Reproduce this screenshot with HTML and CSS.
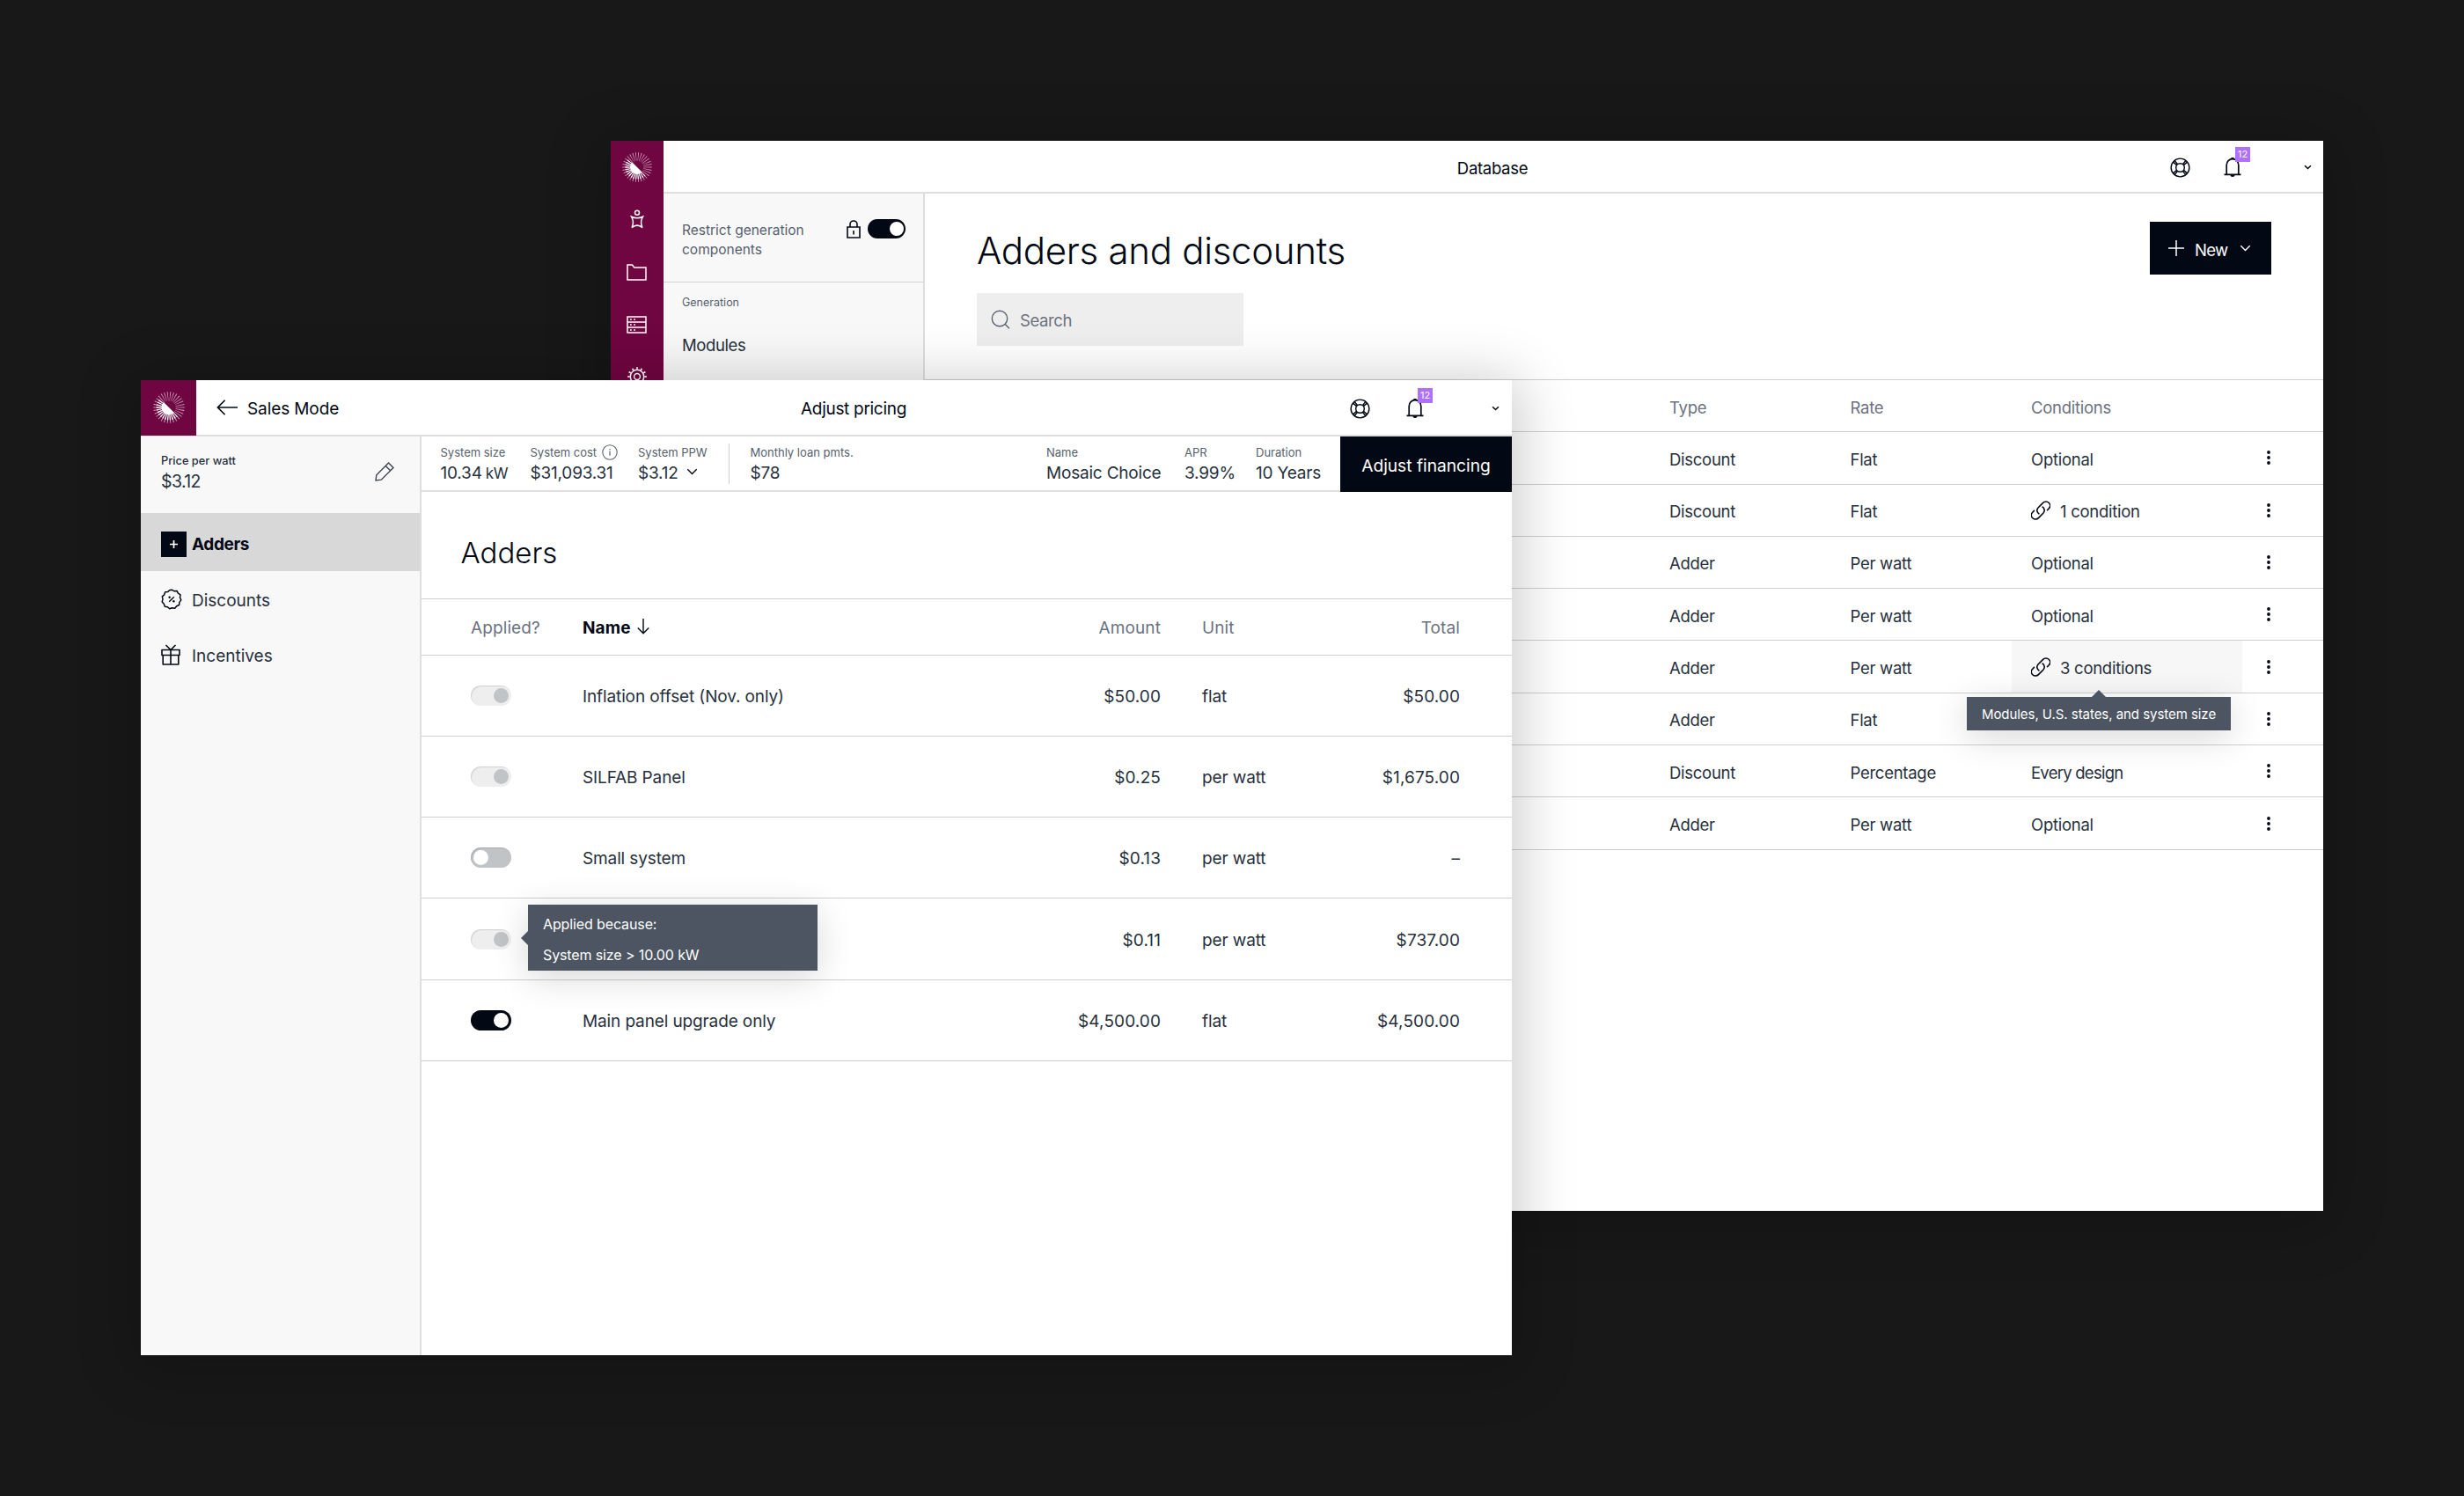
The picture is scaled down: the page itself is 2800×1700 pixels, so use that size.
FILE: index.html
```html
<!DOCTYPE html>
<html lang="en">
<head>
  <meta charset="utf-8">
  <title>Adjust pricing</title>
  <link rel="stylesheet" href="styles.css">
</head>
<body>
  <!-- Icons -->
  <svg class="sprite" width="0" height="0">
    <defs>
      <clipPath id="lower-half"><path d="M0 0L34 34H0z"/></clipPath>
    </defs>
    <symbol id="logo" viewBox="0 0 34 34">
      <circle cx="17" cy="17" r="12" fill="none" stroke="#fff" stroke-opacity=".6" stroke-width="9.6" pathLength="120" stroke-dasharray="1.15 2.85" transform="rotate(-1.7 17 17)"/>
      <g clip-path="url(#lower-half)">
        <circle cx="17" cy="17" r="8" fill="#fff"/>
        <circle cx="17" cy="17" r="10.6" fill="none" stroke="#fff" stroke-width="6" pathLength="120" stroke-dasharray="2 2" transform="rotate(-3 17 17)"/>
      </g>
    </symbol>
    <symbol id="person" viewBox="0 0 16 22">
      <g fill="none" stroke="#fff" stroke-width="1.5">
        <circle cx="8" cy="3.8" r="2.5"/>
        <path d="M1.6 8.3Q8 11.2 14.4 8.3Q11 14 14 20.6Q8 15.6 2 20.6Q5 14 1.6 8.3z"/>
      </g>
    </symbol>
    <symbol id="folder" viewBox="0 0 23 19">
      <path d="M1 1h5.5l2.2 3H22v14H1z" fill="none" stroke="#fff" stroke-width="1.5"/>
    </symbol>
    <symbol id="server" viewBox="0 0 23 20">
      <path d="M1 1h21v18H1zM1 7h21M1 13h21" fill="none" stroke="#fff" stroke-width="1.5"/>
      <path d="M4 4h1.8M8.2 4h1.8M4 10h1.8M8.2 10h1.8M4 16h1.8M8.2 16h1.8" stroke="#fff" stroke-width="1.7"/>
    </symbol>
    <symbol id="gear" viewBox="0 0 22 22">
      <g fill="none" stroke="#fff">
        <circle cx="11" cy="11" r="7.7" stroke-width="1.5"/>
        <circle cx="11" cy="11" r="3.4" stroke-width="1.5"/>
        <circle cx="11" cy="11" r="9.5" stroke-width="2.6" pathLength="120" stroke-dasharray="3.4 6.6" transform="rotate(-5 11 11)"/>
      </g>
    </symbol>
    <symbol id="lock" viewBox="0 0 16 21">
      <path d="M1 8h14v12H1zM4 8V5a4 4 0 0 1 8 0v3M8 12v4.4" fill="none" stroke="#020814" stroke-width="1.6"/>
    </symbol>
    <symbol id="buoy" viewBox="0 0 24 24">
      <g fill="none" stroke="#020814" stroke-width="1.5">
        <circle cx="12" cy="12" r="10.8"/>
        <circle cx="12" cy="12" r="5"/>
        <path d="M3.6 5.4L8 9M5.4 3.6L9 8M20.4 5.4L16 9M18.6 3.6L15 8M3.6 18.6L8 15M5.4 20.4L9 16M20.4 18.6L16 15M18.6 20.4L15 16"/>
      </g>
    </symbol>
    <symbol id="bell" viewBox="0 0 20 24">
      <path d="M.5 20.3h19M3.2 20V9.5a6.8 6.8 0 0 1 13.6 0V20M10 3V1.2" fill="none" stroke="#020814" stroke-width="1.7"/>
      <path d="M8.4 1h3.2v1.6H8.4zM7.5 20.5h5a2.5 2.5 0 0 1-5 0z" fill="#020814"/>
    </symbol>
    <symbol id="chevron" viewBox="0 0 12 8">
      <path d="M.8 1.2L6 6.5L11.2 1.2" fill="none" stroke="currentColor" stroke-width="1.4"/>
    </symbol>
    <symbol id="chevron-small" viewBox="0 0 10 6">
      <path d="M1.2 1L5 4.7L8.8 1" fill="none" stroke="#020814" stroke-width="1.7"/>
    </symbol>
    <symbol id="plus" viewBox="0 0 18 18">
      <path d="M9 0v18M0 9h18" stroke="#fff"/>
    </symbol>
    <symbol id="search" viewBox="0 0 22 22">
      <path d="M15.8 16L21 21.2M18.7 10a8.7 8.7 0 1 1-17.4 0a8.7 8.7 0 0 1 17.4 0z" fill="none" stroke="#5b6472" stroke-width="1.4"/>
    </symbol>
    <symbol id="back" viewBox="0 0 24 18">
      <path d="M1.4 9H24M9.6 .8L1.4 9l8.2 8.2" fill="none" stroke="#020814" stroke-width="1.6"/>
    </symbol>
    <symbol id="pencil" viewBox="0 0 22 22">
      <path d="M1 21l.8-6.2L15.6 1L21 6.4L7.2 20.2zM12.2 4.4l5.4 5.4" fill="none" stroke="#3c4552" stroke-width="1.4"/>
    </symbol>
    <symbol id="percent" viewBox="0 0 24 24">
      <path d="M12 1.2L14.8 2.7L18 2.4L19.4 5.2L22 6.9L21.5 10L22.8 12.9L20.9 15.4L20.6 18.5L17.7 19.7L15.7 22.2L12.6 21.7L9.7 22.8L7.4 20.7L4.3 20.2L3.3 17.2L1.2 14.9L2 11.9L1.3 8.8L3.7 6.8L4.7 3.8L7.8 3.4L9.6 1.8z" fill="none" stroke="#020814" stroke-width="1.5" stroke-linejoin="round"/>
      <path d="M14.8 9.2L9.2 14.8" stroke="#020814" stroke-width="1.4"/>
      <circle cx="9.6" cy="9.8" r="1.2" fill="#020814"/>
      <circle cx="14.4" cy="14.2" r="1.2" fill="#020814"/>
    </symbol>
    <symbol id="gift" viewBox="0 0 22 24">
      <path d="M1 6.5h20v6H1zM2.2 12.5V23h17.6V12.5M11 6.5V23M5.5 1L11 6.5L16.5 1" fill="none" stroke="#020814" stroke-width="1.6" stroke-linejoin="round"/>
    </symbol>
    <symbol id="down" viewBox="0 0 14 18">
      <path d="M7 0v16.5M.8 10.5L7 16.7l6.2-6.2" fill="none" stroke="#020814" stroke-width="1.4"/>
    </symbol>
    <symbol id="link" viewBox="0 0 22 22">
      <g fill="none" stroke="#020814" stroke-width="1.6">
        <path d="M9.4 15.2a4.6 4.6 0 0 1-1.4-7.2l5.6-5.6a4.6 4.6 0 0 1 6.7 6.4l-2.2 2.3"/>
        <path d="M12.6 6.8a4.6 4.6 0 0 1 1.4 7.2l-5.6 5.6a4.6 4.6 0 0 1-6.7-6.4l2.2-2.3"/>
      </g>
    </symbol>
    <symbol id="dots" viewBox="0 0 4 16">
      <circle cx="2" cy="2" r="1.9"/><circle cx="2" cy="8" r="1.9"/><circle cx="2" cy="14" r="1.9"/>
    </symbol>
    <symbol id="info" viewBox="0 0 18 18">
      <circle cx="9" cy="9" r="8.2" fill="none" stroke="#5b6472" stroke-width="1.1"/>
      <path d="M9 7.5v5.3M9 4.9v1.4" stroke="#5b6472" stroke-width="1.2"/>
    </symbol>
  </svg>

  <!-- Database window -->
  <div class="window database">
    <div class="rail">
      <svg class="rail-logo"><use href="#logo"/></svg>
      <svg class="rail-person"><use href="#person"/></svg>
      <svg class="rail-folder"><use href="#folder"/></svg>
      <svg class="rail-server"><use href="#server"/></svg>
      <svg class="rail-gear"><use href="#gear"/></svg>
    </div>
    <div class="db-body">
      <div class="topbar">
        <span class="title">Database</span>
        <div class="top-icons">
          <svg class="buoy"><use href="#buoy"/></svg>
          <div class="bell"><svg><use href="#bell"/></svg><span class="badge">12</span></div>
          <svg class="chevron-small"><use href="#chevron-small"/></svg>
        </div>
      </div>
      <div class="db-columns">
        <div class="db-side">
          <div class="restrict">
            <span class="restrict-label">Restrict generation<br>components</span>
            <svg class="lock"><use href="#lock"/></svg>
            <span class="toggle on"></span>
          </div>
          <div class="side-group">Generation</div>
          <div class="side-link">Modules</div>
        </div>
        <div class="db-main">
          <div class="db-head">
            <div>
              <h1>Adders and discounts</h1>
              <div class="search"><svg><use href="#search"/></svg><span>Search</span></div>
            </div>
            <button class="new-btn"><svg class="plus"><use href="#plus"/></svg><span>New</span><svg class="chevron"><use href="#chevron"/></svg></button>
          </div>
          <div class="db-table">
            <div class="db-row db-th"><span>Type</span><span>Rate</span><span>Conditions</span></div>
            <div class="db-row"><span>Discount</span><span>Flat</span><span>Optional</span><svg class="dots"><use href="#dots"/></svg></div>
            <div class="db-row"><span>Discount</span><span>Flat</span><span class="cond"><svg><use href="#link"/></svg><b>1 condition</b></span><svg class="dots"><use href="#dots"/></svg></div>
            <div class="db-row"><span>Adder</span><span>Per watt</span><span>Optional</span><svg class="dots"><use href="#dots"/></svg></div>
            <div class="db-row"><span>Adder</span><span>Per watt</span><span>Optional</span><svg class="dots"><use href="#dots"/></svg></div>
            <div class="db-row">
              <span>Adder</span><span>Per watt</span>
              <span class="cond hover"><svg><use href="#link"/></svg><b>3 conditions</b>
                <i class="tooltip tip-below">Modules, U.S. states, and system size</i>
              </span>
              <svg class="dots"><use href="#dots"/></svg>
            </div>
            <div class="db-row"><span>Adder</span><span>Flat</span><span></span><svg class="dots"><use href="#dots"/></svg></div>
            <div class="db-row"><span>Discount</span><span>Percentage</span><span class="tight">Every design</span><svg class="dots"><use href="#dots"/></svg></div>
            <div class="db-row"><span>Adder</span><span>Per watt</span><span>Optional</span><svg class="dots"><use href="#dots"/></svg></div>
          </div>
        </div>
      </div>
    </div>
  </div>

  <!-- Pricing window -->
  <div class="window pricing">
    <div class="topbar">
      <div class="logo-box"><svg><use href="#logo"/></svg></div>
      <div class="back"><svg><use href="#back"/></svg><span>Sales Mode</span></div>
      <span class="title">Adjust pricing</span>
      <div class="top-icons">
        <svg class="buoy"><use href="#buoy"/></svg>
        <div class="bell"><svg><use href="#bell"/></svg><span class="badge">12</span></div>
        <svg class="chevron-small"><use href="#chevron-small"/></svg>
      </div>
    </div>
    <div class="pr-columns">
      <div class="pr-side">
        <div class="price">
          <div><div class="price-label">Price per watt</div><div class="price-value">$3.12</div></div>
          <svg class="pencil"><use href="#pencil"/></svg>
        </div>
        <div class="nav-item active"><em class="plus-box"><svg><use href="#plus"/></svg></em><span>Adders</span></div>
        <div class="nav-item"><em><svg class="percent"><use href="#percent"/></svg></em><span>Discounts</span></div>
        <div class="nav-item"><em><svg class="gift"><use href="#gift"/></svg></em><span>Incentives</span></div>
      </div>
      <div class="pr-main">
        <div class="stats">
          <div class="stat stat-size"><label>System size</label><strong>10.34<small>kW</small></strong></div>
          <div class="stat stat-cost"><label>System cost<svg class="info"><use href="#info"/></svg></label><strong>$31,093.31</strong></div>
          <div class="stat stat-ppw"><label>System PPW</label><strong>$3.12<svg class="chevron"><use href="#chevron"/></svg></strong></div>
          <div class="stat stat-loan"><label>Monthly loan pmts.</label><strong>$78</strong></div>
          <div class="stat stat-name"><label>Name</label><strong>Mosaic Choice</strong></div>
          <div class="stat stat-apr"><label>APR</label><strong>3.99%</strong></div>
          <div class="stat stat-years"><label>Duration</label><strong>10 Years</strong></div>
          <button class="finance-btn"><span>Adjust financing</span></button>
        </div>
        <h2>Adders</h2>
        <div class="pr-table">
          <div class="pr-row pr-th"><span>Applied?</span><span class="sorted"><b>Name</b><svg><use href="#down"/></svg></span><span class="num">Amount</span><span>Unit</span><span class="num">Total</span></div>
          <div class="pr-row"><i class="toggle locked"></i><span>Inflation offset (Nov. only)</span><span class="num">$50.00</span><span>flat</span><span class="num">$50.00</span></div>
          <div class="pr-row"><i class="toggle locked"></i><span>SILFAB Panel</span><span class="num">$0.25</span><span>per watt</span><span class="num">$1,675.00</span></div>
          <div class="pr-row"><i class="toggle"></i><span>Small system</span><span class="num">$0.13</span><span>per watt</span><span class="num">–</span></div>
          <div class="pr-row">
            <i class="toggle locked"></i>
            <span></span>
            <span class="num">$0.11</span><span>per watt</span><span class="num">$737.00</span>
            <div class="tooltip tip-right"><p>Applied because:</p><p>System size &gt; 10.00 kW</p></div>
          </div>
          <div class="pr-row"><i class="toggle on"></i><span>Main panel upgrade only</span><span class="num">$4,500.00</span><span>flat</span><span class="num">$4,500.00</span></div>
        </div>
      </div>
    </div>
  </div>
</body>
</html>
```
FILE: styles.css
```css
* {
  box-sizing: border-box;
}

body {
  margin: 0;
  width: 2800px;
  height: 1700px;
  position: relative;
  overflow: hidden;
  background-color: #181818;
  font-family: Inter, "Liberation Sans", sans-serif;
  font-size: 19px;
  line-height: 1.2;
  color: #27303d;
}

svg {
  display: block;
  flex: none;
}

.sprite {
  position: absolute;
}

b,
i,
em,
strong {
  font-weight: inherit;
  font-style: normal;
}

button {
  border: none;
  padding: 0;
  border-radius: 0;
  background-color: #020814;
  color: #fff;
  font-family: inherit;
}

.window {
  position: absolute;
  background-color: #fff;
  box-shadow: 0 8px 60px 10px rgba(0, 0, 0, 0.2);
}

/* Shared parts */
.topbar {
  position: relative;
  display: flex;
  align-items: center;
  border-bottom: 2px solid #dedede;
}

.title {
  position: absolute;
  left: 0;
  right: 0;
  padding-top: 5px;
  text-align: center;
  letter-spacing: -0.3px;
  color: #020814;
}

.top-icons {
  display: flex;
  align-items: center;
  margin-left: auto;
  padding-top: 2px;
}

.buoy {
  width: 23px;
  height: 23px;
}

.bell {
  position: relative;
}

.bell svg {
  width: 20px;
  height: 24px;
}

.badge {
  position: absolute;
  left: 13px;
  top: -11px;
  width: 17px;
  height: 17px;
  background-color: #b070ff;
  color: #fff;
  font-size: 11px;
  line-height: 17px;
  text-align: center;
}

.chevron-small {
  width: 9px;
  height: 6px;
}

.chevron {
  width: 13px;
  height: 8px;
}

.toggle {
  display: block;
  width: 46px;
  height: 23px;
  border-radius: 12px;
  background-color: #c0c4c7;
  box-shadow: inset 1px 1px 1px rgba(0, 0, 0, 0.12);
  padding: 3px;
}

.toggle::before {
  content: "";
  display: block;
  width: 17px;
  height: 17px;
  border-radius: 50%;
  background-color: #fff;
}

.toggle.locked {
  background-color: #eee;
}

.toggle.locked::before {
  background-color: #c0c4c7;
  margin-left: 23px;
}

.toggle.on {
  background-color: #020814;
}

.toggle.on::before {
  margin-left: 23px;
}

.tooltip {
  position: absolute;
  z-index: 2;
  background-color: #4c5561;
  color: #fff;
  font-size: 16px;
  box-shadow: 0 8px 40px rgba(0, 0, 0, 0.16);
}

.tooltip::before {
  content: "";
  position: absolute;
  border: 8px solid transparent;
}

/* Database window */
.database {
  left: 694px;
  top: 160px;
  width: 1946px;
  height: 1216px;
  display: flex;
  font-size: 18.5px;
}

.rail {
  width: 60px;
  background-color: #6f0541;
  display: flex;
  flex-direction: column;
  align-items: center;
  padding: 13px 1px 0 0;
}

.rail-logo { width: 34px; height: 34px; }
.rail-person { width: 16px; height: 22px; margin-top: 31px; }
.rail-folder { width: 23px; height: 19px; margin-top: 40px; }
.rail-server { width: 23px; height: 20px; margin-top: 40px; }
.rail-gear { width: 22px; height: 22px; margin-top: 38px; }

.db-body {
  flex: 1;
}

.db-body .topbar {
  height: 60px;
}

.db-body .title {
  padding-right: 2px;
}

.db-body .top-icons {
  padding-right: 13px;
}

.db-body .bell {
  margin-left: 38px;
  margin-right: 71px;
}

.db-columns {
  display: flex;
  height: 1156px;
}

.db-side {
  width: 297px;
  background-color: #f8f8f8;
  border-right: 2px solid #dedede;
}

.restrict {
  display: flex;
  align-items: flex-start;
  height: 101px;
  padding: 29px 20px 0 21px;
  border-bottom: 1px solid #d4d4d4;
}

.restrict-label {
  width: 187px;
  padding-top: 2px;
  font-size: 15.5px;
  line-height: 22px;
  color: #565f6c;
}

.lock {
  width: 16px;
  height: 21px;
  margin-top: 1px;
}

.restrict .toggle {
  width: 43px;
  height: 22px;
  margin-left: 8px;
}

.restrict .toggle::before {
  width: 16px;
  height: 16px;
  margin-left: 22px;
}

.side-group {
  padding: 15px 0 0 21px;
  font-size: 12.5px;
  color: #565f6c;
}

.side-link {
  padding: 30px 0 0 21px;
  letter-spacing: -0.4px;
}

.db-main {
  flex: 1;
}

.db-head {
  display: flex;
  justify-content: space-between;
  height: 211px;
  padding: 32px 59px 0 59px;
}

h1 {
  margin: 8px 0 0;
  font-size: 42px;
  font-weight: 300;
  line-height: 50px;
  letter-spacing: -0.3px;
  color: #020814;
}

.search {
  display: flex;
  align-items: center;
  width: 303px;
  height: 60px;
  margin-top: 23px;
  padding-left: 16px;
  background-color: #eee;
  letter-spacing: -0.4px;
  color: #6b7280;
}

.search svg {
  width: 22px;
  height: 22px;
  margin-right: 11px;
}

.search span {
  padding-top: 3px;
}

.new-btn {
  display: flex;
  align-items: center;
  width: 138px;
  height: 60px;
  padding-left: 21px;
  font-size: 18.5px;
  letter-spacing: -0.7px;
}

.new-btn span {
  padding-top: 3px;
}

.new-btn .plus {
  width: 18px;
  height: 18px;
  margin-right: 12px;
  stroke-width: 1.5;
}

.new-btn .chevron {
  margin-left: auto;
  margin-right: 23px;
}

.db-table {
  border-top: 1px solid #cfcfcf;
}

.db-row {
  display: grid;
  grid-template-columns: 205.5px 205.5px 270px 4px;
  align-items: center;
  height: 59.3px;
  padding-left: 846px;
  border-bottom: 1px solid #cfcfcf;
  letter-spacing: -0.27px;
}

.db-row > span,
.cond b {
  padding-top: 3px;
}

.db-row .tight {
  letter-spacing: -0.75px;
}

.db-th {
  color: #6b7280;
}

.dots {
  width: 4px;
  height: 16px;
  fill: #020814;
  margin-left: -2px;
}

.db-row .cond {
  position: relative;
  display: flex;
  align-items: center;
  width: 262px;
  height: 58.3px;
  margin-left: -22px;
  padding: 0 0 0 22px;
}

.cond svg {
  width: 22px;
  height: 22px;
  margin-right: 11px;
}

.cond.hover {
  background-color: #f7f7f7;
}

.tip-below {
  left: -51px;
  top: 64px;
  width: 300px;
  height: 38px;
  font-size: 15px;
  line-height: 40px;
  letter-spacing: -0.05px;
  text-align: center;
}

.tip-below::before {
  left: 142px;
  top: -16px;
  border-bottom-color: #4c5561;
}

/* Pricing window */
.pricing {
  left: 160px;
  top: 432px;
  width: 1558px;
  height: 1108px;
}

.pricing .topbar {
  height: 64px;
}

.logo-box {
  width: 63px;
  height: 63px;
  background-color: #6f0541;
  display: flex;
  align-items: center;
  justify-content: center;
}

.logo-box svg {
  width: 36px;
  height: 36px;
}

.back {
  display: flex;
  align-items: center;
  margin-left: 23px;
  color: #020814;
  letter-spacing: -0.1px;
}

.back svg {
  width: 24px;
  height: 18px;
  margin-right: 11px;
}

.back span {
  padding-top: 5px;
}

.pricing .title {
  padding-left: 62px;
}

.pricing .top-icons {
  padding-right: 14px;
}

.pricing .bell {
  margin-left: 41px;
  margin-right: 77px;
}

.pr-columns {
  display: flex;
  height: 1044px;
}

.pr-side {
  width: 319px;
  background-color: #f8f8f8;
  border-right: 2px solid #dedede;
}

.price {
  display: flex;
  justify-content: space-between;
  height: 87px;
  padding: 19px 29px 0 23px;
}

.price-label {
  font-size: 12.8px;
  font-weight: 500;
  line-height: 17px;
}

.price-value {
  margin-top: 3px;
  font-size: 19.5px;
  line-height: 24px;
  letter-spacing: -0.6px;
}

.pencil {
  width: 22px;
  height: 22px;
  margin-top: 10px;
}

.nav-item {
  display: flex;
  align-items: center;
  height: 63px;
  padding-left: 23px;
}

.nav-item span {
  padding-top: 5px;
}

.nav-item em {
  width: 35px;
}

.percent { width: 24px; height: 24px; }
.gift { width: 22px; height: 24px; }

.nav-item.active {
  height: 66px;
  padding-top: 5px;
  background-color: #d8d8d8;
  color: #020814;
  font-weight: 700;
  letter-spacing: -0.4px;
}

.nav-item.active span {
  padding-top: 2px;
}

.nav-item .plus-box {
  display: flex;
  align-items: center;
  justify-content: center;
  width: 29px;
  height: 29px;
  margin-right: 6px;
  background-color: #020814;
}

.plus-box svg {
  width: 9px;
  height: 9px;
  stroke-width: 3.4;
}

.pr-main {
  flex: 1;
}

.stats {
  display: flex;
  height: 63px;
  border-bottom: 2px solid #e0e0e0;
}

.stat {
  padding-top: 10px;
}

.stat label {
  display: flex;
  align-items: center;
  height: 18px;
  font-size: 13px;
  color: #565f6c;
  white-space: nowrap;
}

.stat strong {
  display: flex;
  align-items: baseline;
  height: 24px;
  margin-top: 2px;
  font-size: 19px;
  line-height: 24px;
  letter-spacing: -0.2px;
  white-space: nowrap;
}

.stat small {
  margin-left: 4px;
  font-size: 17px;
}

.stat .chevron {
  align-self: center;
  margin-left: 9px;
  margin-bottom: 4px;
  color: #020814;
}

.info {
  width: 18px;
  height: 18px;
  margin: -2px 0 0 6px;
}

.stat-size { margin-left: 21.5px; width: 102px; }
.stat-cost { width: 122.5px; }
.stat-ppw { width: 103px; }
.stat-name { margin-left: auto; width: 157px; }
.stat-apr { width: 81px; }
.stat-years { width: 96px; }

.stat-loan {
  position: relative;
  width: 150px;
  margin-left: 24.5px;
}

.stat-loan::before {
  content: "";
  position: absolute;
  left: -25px;
  top: 8px;
  width: 1px;
  height: 46px;
  background-color: #d0d0d0;
}

.finance-btn {
  width: 195px;
  height: 63px;
  padding-top: 3px;
  font-size: 19.2px;
}

h2 {
  margin: 49px 0 0 44.5px;
  height: 72px;
  font-size: 33px;
  font-weight: 300;
  line-height: 40px;
  color: #020814;
}

.pr-table {
  border-top: 1px solid #cfcfcf;
}

.pr-row {
  position: relative;
  display: grid;
  grid-template-columns: 127px 430.5px 226.5px 207px 1fr;
  align-items: center;
  height: 92.3px;
  padding: 0 59px 0 56px;
  border-bottom: 1px solid #cfcfcf;
  letter-spacing: -0.12px;
}

.pr-row > span {
  padding-top: 4px;
}

.pr-row > .num + span {
  padding-left: 47px;
}

.pr-row .num {
  text-align: right;
  letter-spacing: 0.1px;
}

.pr-row.pr-th {
  height: 63.5px;
  color: #6b7280;
  letter-spacing: 0.1px;
}

.sorted {
  display: flex;
  align-items: center;
}

.sorted b {
  font-weight: 700;
  color: #020814;
}

.sorted svg {
  width: 14px;
  height: 18px;
  margin: -4px 0 0 7px;
}

.tip-right {
  left: 121px;
  top: 7px;
  width: 329px;
  height: 75px;
  padding: 10px 17px;
}

.tip-right::before {
  left: -16px;
  top: 30px;
  border-right-color: #4c5561;
}

.tip-right p {
  margin: 0 0 11px;
  line-height: 24px;
}
```
